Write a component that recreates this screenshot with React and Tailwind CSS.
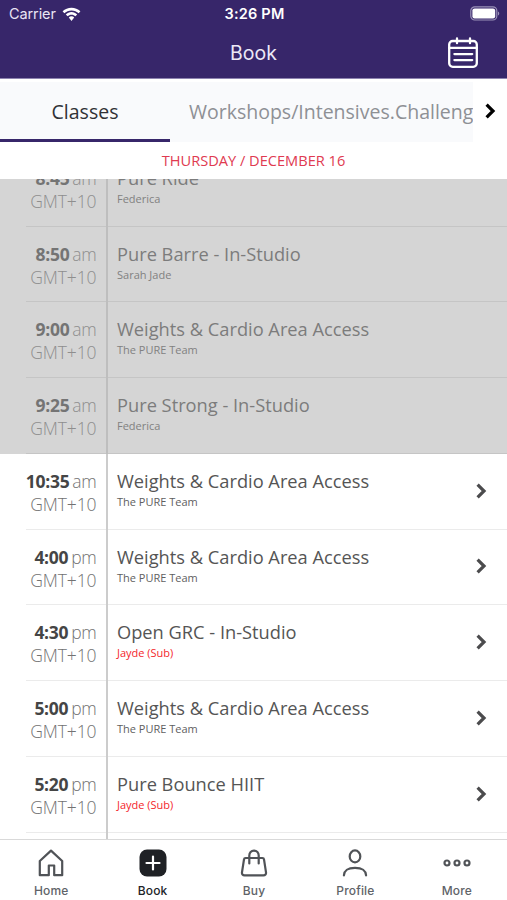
import React from 'react';

const classes = [
    { time: '8:45', period: 'am', title: 'Pure Ride', teacher: 'Federica', past: true },
    { time: '8:50', period: 'am', title: 'Pure Barre - In-Studio', teacher: 'Sarah Jade', past: true },
    { time: '9:00', period: 'am', title: 'Weights & Cardio Area Access', teacher: 'The PURE Team', past: true },
    { time: '9:25', period: 'am', title: 'Pure Strong - In-Studio', teacher: 'Federica', past: true },
    { time: '10:35', period: 'am', title: 'Weights & Cardio Area Access', teacher: 'The PURE Team' },
    { time: '4:00', period: 'pm', title: 'Weights & Cardio Area Access', teacher: 'The PURE Team' },
    { time: '4:30', period: 'pm', title: 'Open GRC - In-Studio', teacher: 'Jayde (Sub)', sub: true },
    { time: '5:00', period: 'pm', title: 'Weights & Cardio Area Access', teacher: 'The PURE Team' },
    { time: '5:20', period: 'pm', title: 'Pure Bounce HIIT', teacher: 'Jayde (Sub)', sub: true },
];

const StatusBar = () => (
    <div className="h-[27px] grid grid-cols-3 items-center pl-[9px] pr-[7px] text-white">
        <div className="flex items-center gap-[6px] pt-px">
            <span className="text-[14.5px] leading-none tracking-[-0.1px] text-[#e9e4f4]">Carrier</span>
            <svg width="19" height="15" viewBox="0 0 19 15" fill="white">
                <path d="M9.5 0.800C6.100.8 3 2.100.6 4.300l1.700 2C4.200 4.500 6.700 3.400 9.500 3.400s5.300 1.100 7.200 2.900l1.700-2C16 2.100 12.900.8 9.500.8z" />
                <path d="M9.500 5c-2.200 0-4.200.9-5.700 2.400l1.800 1.900c1-1 2.400-1.600 3.900-1.600s2.900.6 3.900 1.600l1.800-1.900C13.700 5.900 11.700 5 9.500 5z" />
                <path d="M9.500 9.300c-1.100 0-2 .4-2.700 1.100l2.700 3.500 2.700-3.500c-.7-.7-1.600-1.100-2.700-1.100z" />
            </svg>
        </div>
        <span className="text-[14.5px] leading-none font-semibold tracking-[0.2px] text-center pt-px">3:26 PM</span>
        <svg className="justify-self-end" width="31" height="15" viewBox="0 0 31 15">
            <rect x="1.800" y="0.800" width="26" height="13.200" rx="4" fill="none" stroke="#9b92b8" strokeWidth="1.200" />
            <rect x="3.400" y="2.400" width="22.800" height="10" rx="2.200" fill="white" />
            <path d="M29 5.400c1.700.7 1.700 3.300 0 4z" fill="#9b92b8" />
        </svg>
    </div>
);

const CalendarIcon = () => (
    <svg width="32" height="32" viewBox="0 0 32 32" fill="none" stroke="white" strokeWidth="2.300" strokeLinecap="round">
        <rect x="2.200" y="4" width="27.600" height="25.800" rx="3.500" />
        <path d="M2.200 10.900h27.600M10 1.400v4.800M23 1.400v4.800M7.400 17.100h17.800M7.400 23.100h17.800" />
    </svg>
);

const Chevron = ({ className }) => (
    <svg className={className} width="11" height="16" viewBox="0 0 11 16" fill="none" stroke="currentColor" strokeWidth="3.200">
        <path d="M1.600 1.600 8 8l-6.400 6.400" />
    </svg>
);

const ClassRow = ({ item }) => (
    <div className={`h-[75.75px] shrink-0 flex pl-[26px] ${item.past ? 'bg-[#d5d5d5]' : 'bg-white'}`}>
        <div className={`flex-1 flex border-b ${item.past ? 'border-[#c5c5c5]' : 'border-[#ebebeb]'}`}>
            <div className={`w-[82px] shrink-0 border-r-2 pt-[16px] pr-[9.500px] flex flex-col items-end whitespace-nowrap -mb-px ${item.past ? 'border-[#bebebe] text-[#8e8e8e]' : 'border-[#cccccc] text-[#727272]'}`}>
                <div className="text-[17.500px] leading-[23px] font-light flex gap-[3px]">
                    <span className={`font-bold tracking-[-0.3px] ${item.past ? 'text-[#747474]' : 'text-[#454545]'}`}>{item.time}</span>
                    <span className="tracking-[-0.3px]">{item.period}</span>
                </div>
                <div className="text-[17.500px] leading-[22px] font-light tracking-[-0.1px]">GMT+10</div>
            </div>
            <div className="flex-1 pt-[15px] pl-[9px]">
                <div className={`text-[18.250px] leading-[23px] ${item.past ? 'text-[#7c7c7c]' : 'text-[#555555]'}`}>{item.title}</div>
                <div className={`text-[11px] leading-[20.500px] ${item.sub ? 'text-[#f4262b]' : item.past ? 'text-[#818181]' : 'text-[#606060]'}`}>{item.teacher}</div>
            </div>
            {!item.past && <Chevron className="self-center mr-[20.500px] -mt-px text-[#4b4b4d]" />}
        </div>
    </div>
);

const HomeIcon = () => (
    <svg width="28" height="28" viewBox="0 1 28 28" fill="none" stroke="#505357" strokeWidth="2.200" strokeLinejoin="round">
        <path d="M2.800 13 14 2.600 25.200 13v14.200h-8V17.500h-5.400v9.700h-9z" />
    </svg>
);

const BookIcon = () => (
    <svg width="28" height="28" viewBox="0 1 28 28">
        <rect x="0.500" y="1.500" width="27" height="27" rx="7.500" fill="#1f2125" />
        <path d="M14 8.500v13M7.500 15h13" stroke="white" strokeWidth="2.200" strokeLinecap="round" />
    </svg>
);

const BuyIcon = () => (
    <svg width="28" height="28" viewBox="0 1 28 28" fill="none" stroke="#505357" strokeWidth="2.200" strokeLinejoin="round" strokeLinecap="round">
        <path d="M5.600 10h16.800c.9 0 1.500.5 1.600 1.300l2 13c.3 1.800-.8 3-2.500 3h-19c-1.700 0-2.800-1.200-2.500-3l2-13c.1-.8.700-1.300 1.600-1.300z" />
        <path d="M9.300 15.500V7.600C9.300 4.700 11.200 2.600 14 2.600s4.700 2.100 4.700 5v7.900" />
    </svg>
);

const ProfileIcon = () => (
    <svg width="28" height="28" viewBox="0 1 28 28" fill="none" stroke="#505357" strokeWidth="2.200" strokeLinecap="round">
        <ellipse cx="14" cy="8.400" rx="5.300" ry="6" />
        <path d="M2.900 27.400c.5-5.300 3.500-7.600 11.100-7.600s10.600 2.300 11.100 7.600" />
    </svg>
);

const MoreIcon = () => (
    <svg width="28" height="28" viewBox="0 1 28 28" fill="none" stroke="#505357" strokeWidth="2.200">
        <circle cx="4" cy="15" r="2.500" />
        <circle cx="14" cy="15" r="2.500" />
        <circle cx="24" cy="15" r="2.500" />
    </svg>
);

const navItems = [
    { label: 'Home', Icon: HomeIcon },
    { label: 'Book', Icon: BookIcon, active: true },
    { label: 'Buy', Icon: BuyIcon },
    { label: 'Profile', Icon: ProfileIcon },
    { label: 'More', Icon: MoreIcon },
];

const App = () => {
    return (
        <div className="w-[507px] h-[900px] overflow-hidden bg-white flex flex-col font-['Open_Sans',sans-serif]">
            <header className="h-[79px] shrink-0 bg-[#37266a] border-b border-[#8d83b0] font-['Inter',sans-serif]">
                <StatusBar />
                <div className="h-[51px] grid grid-cols-3 items-center pr-[28px] pl-[28px]">
                    <span></span>
                    <h1 className="text-center text-[19.500px] leading-none pt-[2px] text-[#ece8f6]">Book</h1>
                    <button className="justify-self-end"><CalendarIcon /></button>
                </div>
            </header>

            <div className="h-[63px] shrink-0 flex pt-[3px] text-[19.500px]">
                <div className="w-[473px] shrink-0 flex overflow-hidden whitespace-nowrap bg-[#f9fafc]">
                    <div className="w-[170px] shrink-0 flex items-center justify-center pt-[2px] border-b-[3px] border-[#37266a] text-[#303136]">Classes</div>
                    <div className="pl-[19px] pt-[2px] pb-[3px] flex items-center text-[#8e9095]">Workshops/Intensives.Challeng</div>
                </div>
                <div className="flex-1 flex items-center justify-center pb-[3px]">
                    <Chevron className="text-black" />
                </div>
            </div>

            <div className="h-[37px] shrink-0 flex items-center justify-center text-[14.600px] text-[#e03a51]">THURSDAY / DECEMBER 16</div>

            <main className="flex-1 min-h-0 overflow-hidden">
                <div className="-mt-[28.25px] flex flex-col">
                    {classes.map((item) => (
                        <ClassRow key={item.time} item={item} />
                    ))}
                    {/* start of the next row, still below the fold */}
                    <div className="h-[75.75px] shrink-0 flex pl-[26px]">
                        <div className="w-[82px] border-r-2 border-[#cccccc]"></div>
                    </div>
                </div>
            </main>

            <nav className="h-[61px] shrink-0 border-t border-[#d9d9d9] bg-white grid grid-cols-5 font-['Inter',sans-serif]">
                {navItems.map(({ label, Icon, active }) => (
                    <div key={label} className="flex flex-col items-center pt-[9px] pl-px gap-[6px]">
                        <Icon />
                        <span className={`text-[12px] leading-[16px] font-medium tracking-[0.15px] ${active ? 'text-[#222428]' : 'text-[#606368]'}`}>{label}</span>
                    </div>
                ))}
            </nav>
        </div>
    );
};

export default App;
